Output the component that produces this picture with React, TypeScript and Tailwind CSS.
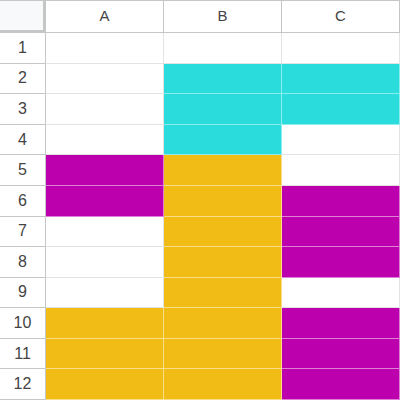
const W = '', C = 'c', M = 'm', Y = 'y';

const rows: string[][] = [
  [W, W, W],
  [W, C, C],
  [W, C, C],
  [W, C, W],
  [M, Y, W],
  [M, Y, M],
  [W, Y, M],
  [W, Y, M],
  [W, Y, W],
  [Y, Y, M],
  [Y, Y, M],
  [Y, Y, M],
];

const fill: Record<string, string> = {
  '': 'bg-white border-[#e2e3e3]',
  c: 'bg-[#2bdcdc] border-[#8beded]',
  m: 'bg-[#bc00ae] border-[#dd80d6]',
  y: 'bg-[#f1bc16] border-[#f8de8a]',
};

export default function App() {
  return (
    <div
      className="grid h-[400px] w-[400px] grid-cols-[46px_repeat(3,1fr)] grid-rows-[32px_repeat(12,1fr)] overflow-hidden border-t border-[#c4c7c5] bg-white text-[#444]"
      style={{ fontFamily: '"Liberation Sans", Arial, sans-serif' }}
    >
      <div className="border-r-[3px] border-b-[3px] border-[#c4c7c5] bg-[#f8f9fa]" />
      {['A', 'B', 'C'].map((h) => (
        <div
          key={h}
          className="flex items-center justify-center border-r border-b border-[#c4c7c5] bg-white text-[15px]"
        >
          {h}
        </div>
      ))}
      {rows.map((r, i) => (
        <>
          <div
            key={'n' + i}
            className="flex items-center justify-center border-r border-b border-[#c4c7c5] bg-white text-[16px]"
          >
            {i + 1}
          </div>
          {r.map((c, j) => (
            <div key={i + '-' + j} className={`border-r border-b ${fill[c]}`} />
          ))}
        </>
      ))}
    </div>
  );
}
